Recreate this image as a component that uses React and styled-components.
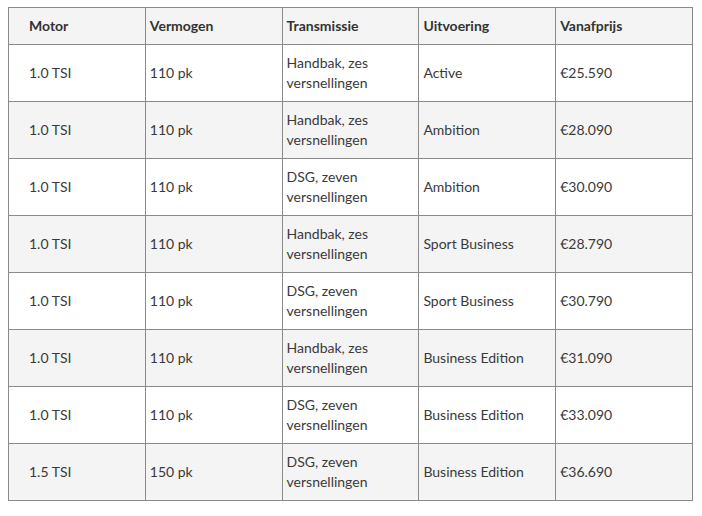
import React from "react";
import styled, { createGlobalStyle } from "styled-components";

const Global = createGlobalStyle`
  html, body { margin: 0; padding: 0; background: #fff; }
  body { font-family: Lato, "Liberation Sans", sans-serif; color: #333; }
`;

const Page = styled.div`
  padding: 7px 10px 0 8px;
`;

const Table = styled.table`
  width: 685px;
  border-collapse: collapse;
  table-layout: fixed;
  font-size: 14px;
  line-height: 20px;
`;

const Row = styled.tr`
  background: ${(p) => (p.$shade ? "#f4f4f4" : "#fff")};
`;

const Head = styled.th`
  border: 1px solid #8a8a8a;
  text-align: left;
  font-weight: 700;
  color: #333;
  padding: 8px 4px;
  height: 20px;
  vertical-align: middle;
  &:first-child { padding-left: 20px; }
`;

const Cell = styled.td`
  border: 1px solid #8a8a8a;
  padding: 8px 4px;
  height: 40px;
  vertical-align: middle;
  color: #3a3a3a;
  &:first-child { padding-left: 20px; }
`;

const headers = ["Motor", "Vermogen", "Transmissie", "Uitvoering", "Vanafprijs"];

const rows = [
  ["1.0 TSI", "110 pk", ["Handbak, zes", "versnellingen"], "Active", "€25.590"],
  ["1.0 TSI", "110 pk", ["Handbak, zes", "versnellingen"], "Ambition", "€28.090"],
  ["1.0 TSI", "110 pk", ["DSG, zeven", "versnellingen"], "Ambition", "€30.090"],
  ["1.0 TSI", "110 pk", ["Handbak, zes", "versnellingen"], "Sport Business", "€28.790"],
  ["1.0 TSI", "110 pk", ["DSG, zeven", "versnellingen"], "Sport Business", "€30.790"],
  ["1.0 TSI", "110 pk", ["Handbak, zes", "versnellingen"], "Business Edition", "€31.090"],
  ["1.0 TSI", "110 pk", ["DSG, zeven", "versnellingen"], "Business Edition", "€33.090"],
  ["1.5 TSI", "150 pk", ["DSG, zeven", "versnellingen"], "Business Edition", "€36.690"],
];

export default function App() {
  return (
    <Page>
      <Global />
      <Table>
        <thead>
          <Row $shade>
            {headers.map((h) => (
              <Head key={h}>{h}</Head>
            ))}
          </Row>
        </thead>
        <tbody>
          {rows.map((r, i) => (
            <Row key={i} $shade={i % 2 === 1}>
              <Cell>{r[0]}</Cell>
              <Cell>{r[1]}</Cell>
              <Cell>
                {r[2][0]}
                <br />
                {r[2][1]}
              </Cell>
              <Cell>{r[3]}</Cell>
              <Cell>{r[4]}</Cell>
            </Row>
          ))}
        </tbody>
      </Table>
    </Page>
  );
}
